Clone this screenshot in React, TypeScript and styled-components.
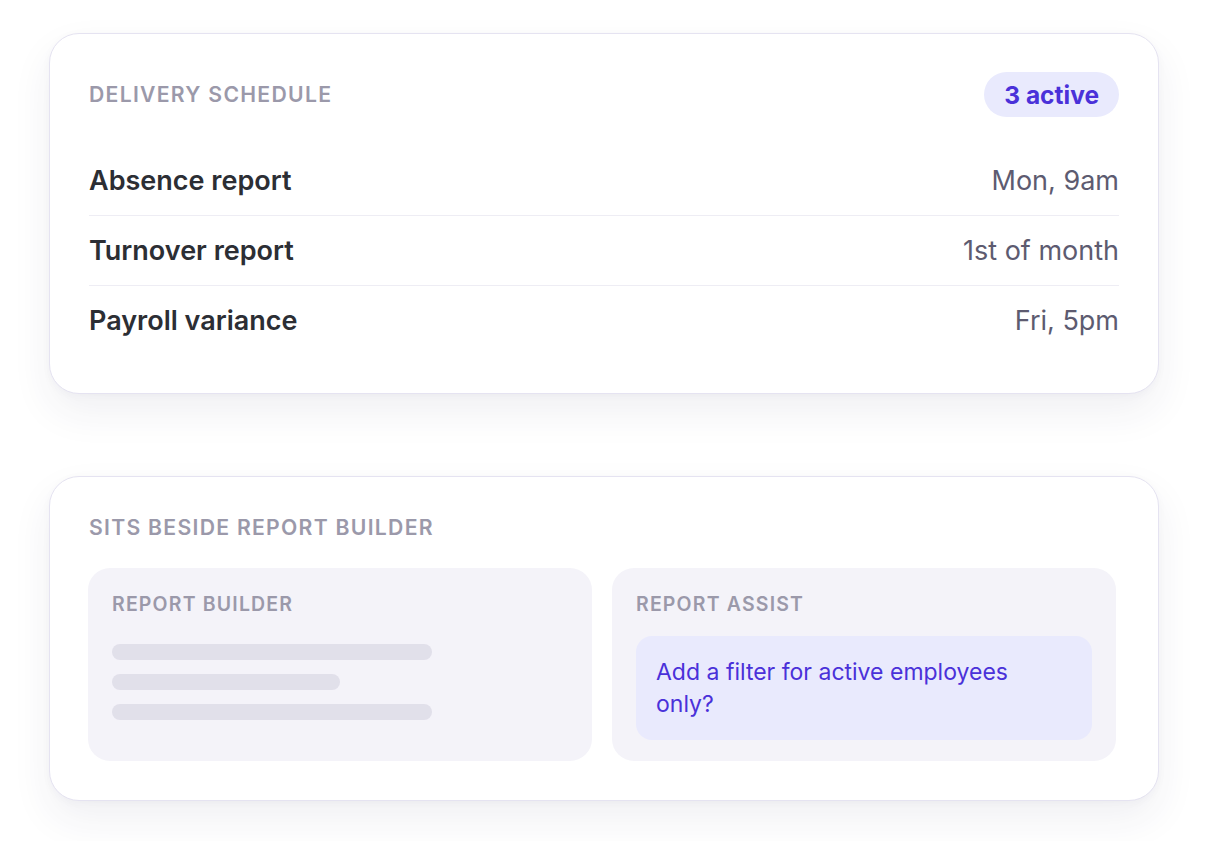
import { FC } from "react";
import styled, { createGlobalStyle } from "styled-components";

const colors = {
    ink: "#2c2e34",
    muted: "#5d5b70",
    label: "#9b99aa",
    line: "#eeedf4",
    border: "#e5e3f1",
    panel: "#f4f3f9",
    skeleton: "#e1e0ea",
    accent: "#4a31d9",
    accentSoft: "#e9eafd",
};

const GlobalStyle = createGlobalStyle`
    * {
        box-sizing: border-box;
    }
    body {
        margin: 0;
        background: #ffffff;
        font-family: Inter, "Noto Sans", sans-serif;
        -webkit-font-smoothing: antialiased;
    }
`;

const Page = styled.main`
    display: flex;
    flex-direction: column;
    gap: 82px;
    padding: 33px 49px 40px;
`;

const Card = styled.section`
    background: #ffffff;
    border: 1.5px solid ${colors.border};
    border-radius: 30px;
    box-shadow: 0 18px 40px rgba(40, 36, 80, 0.07), 0 2px 8px rgba(40, 36, 80, 0.03);
`;

const ScheduleCard = styled(Card)`
    padding: 38px 39px 38px;
`;

const BesideCard = styled(Card)`
    padding: 38px 39px 39px;
`;

const Header = styled.div`
    display: flex;
    align-items: center;
    justify-content: space-between;
    margin-bottom: 29px;
`;

const Eyebrow = styled.h2<{ $size?: number }>`
    margin: 0;
    font-size: ${({ $size }) => $size ?? 21.2}px;
    line-height: 1.2;
    font-weight: 600;
    letter-spacing: 0.06em;
    text-transform: uppercase;
    color: ${colors.label};
`;

const Badge = styled.span`
    display: inline-flex;
    align-items: center;
    height: 45px;
    padding: 0 20px;
    border-radius: 999px;
    background: ${colors.accentSoft};
    color: ${colors.accent};
    font-size: 24.5px;
    font-weight: 700;
`;

const Row = styled.div`
    display: flex;
    align-items: center;
    justify-content: space-between;
    padding: 17px 0;
    line-height: 35px;
    font-size: 27px;
    border-bottom: 1px solid ${colors.line};
    &:last-child {
        border-bottom: none;
    }
`;

const RowName = styled.span`
    font-weight: 600;
    color: ${colors.ink};
`;

const RowWhen = styled.span`
    font-weight: 400;
    color: ${colors.muted};
`;

const Panels = styled.div`
    display: grid;
    grid-template-columns: 1fr 1fr;
    gap: 20px;
    margin: 28px 3px 0 -1px;
`;

const Panel = styled.div`
    display: flex;
    flex-direction: column;
    gap: 19px;
    padding: 25px 24px 21px;
    border-radius: 22px;
    background: ${colors.panel};
`;

const Bars = styled.div`
    display: flex;
    flex-direction: column;
    gap: 14px;
    padding-top: 8px;
`;

const Bar = styled.div<{ $width: number }>`
    width: ${({ $width }) => $width}px;
    height: 16px;
    border-radius: 8px;
    background: ${colors.skeleton};
`;

const Bubble = styled.p`
    margin: 0;
    padding: 20px 28px 20px 20px;
    border-radius: 16px;
    background: ${colors.accentSoft};
    color: ${colors.accent};
    font-size: 23px;
    line-height: 32px;
`;

const schedule = [
    { name: "Absence report", when: "Mon, 9am" },
    { name: "Turnover report", when: "1st of month" },
    { name: "Payroll variance", when: "Fri, 5pm" },
];

const App: FC = () => {
    return (
        <>
            <GlobalStyle />
            <Page>
                <ScheduleCard>
                    <Header>
                        <Eyebrow>Delivery schedule</Eyebrow>
                        <Badge>3 active</Badge>
                    </Header>
                    {schedule.map((item) => (
                        <Row key={item.name}>
                            <RowName>{item.name}</RowName>
                            <RowWhen>{item.when}</RowWhen>
                        </Row>
                    ))}
                </ScheduleCard>
                <BesideCard>
                    <Eyebrow>Sits beside report builder</Eyebrow>
                    <Panels>
                        <Panel>
                            <Eyebrow $size={19.5}>Report builder</Eyebrow>
                            <Bars>
                                <Bar $width={320} />
                                <Bar $width={228} />
                                <Bar $width={320} />
                            </Bars>
                        </Panel>
                        <Panel>
                            <Eyebrow $size={19.5}>Report assist</Eyebrow>
                            <Bubble>Add a filter for active employees only?</Bubble>
                        </Panel>
                    </Panels>
                </BesideCard>
            </Page>
        </>
    );
};

export default App;
